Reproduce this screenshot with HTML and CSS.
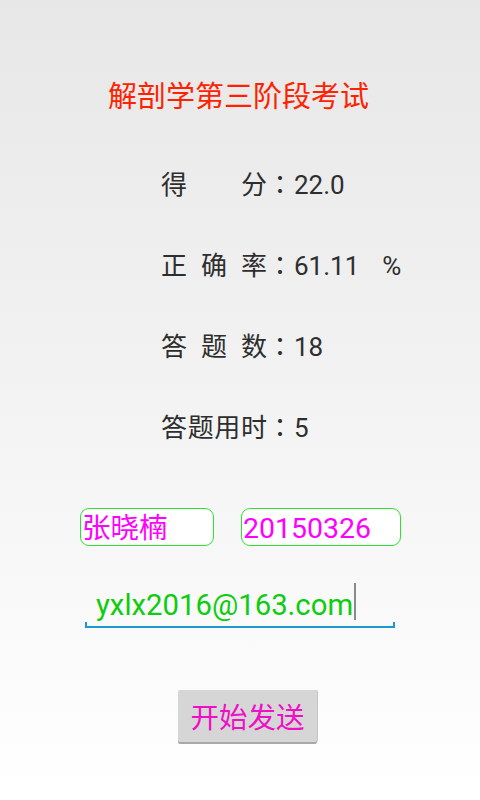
FILE: index.html
```html
<!DOCTYPE html>
<html lang="zh">
<head>
<meta charset="utf-8">
<title>解剖学第三阶段考试</title>
<link rel="stylesheet" href="styles.css">
</head>
<body>
<div class="screen">
  <h1 class="title">解剖学第三阶段考试</h1>
  <div class="stats">
    <div class="row"><span class="label">得分</span><span class="colon">：</span><span class="value">22.0</span></div>
    <div class="row"><span class="label">正确率</span><span class="colon">：</span><span class="value">61.11<span class="pct">%</span></span></div>
    <div class="row"><span class="label">答题数</span><span class="colon">：</span><span class="value">18</span></div>
    <div class="row"><span class="label">答题用时</span><span class="colon">：</span><span class="value">5</span></div>
  </div>
  <div class="boxes">
    <div class="box name">张晓楠</div>
    <div class="box num">20150326</div>
  </div>
  <div class="email">
    <div class="email-text">yxlx2016@163.com<span class="cursor"></span></div>
    <div class="line"></div>
  </div>
  <div class="actions">
    <button class="send">开始发送</button>
  </div>
</div>
</body>
</html>
```
FILE: styles.css
```css
html, body {
  margin: 0;
  padding: 0;
}
body {
  width: 480px;
  height: 800px;
  overflow: hidden;
  background: linear-gradient(to bottom, #e7e7e7 0%, #f4f4f4 55%, #ffffff 100%);
  font-family: Roboto, "Noto Sans CJK SC", sans-serif;
}
.screen {
  display: flex;
  flex-direction: column;
}
.title {
  margin: 0;
  padding-top: 74px;
  padding-right: 3px;
  height: 40px;
  line-height: 40px;
  text-align: center;
  font-size: 29px;
  font-weight: normal;
  color: #ff2200;
  font-family: "Noto Sans CJK SC", sans-serif;
}
.stats {
  margin-top: 49px;
  padding-left: 161px;
  display: flex;
  flex-direction: column;
  gap: 41px;
}
.row {
  height: 40px;
  line-height: 40px;
  font-size: 26px;
  color: #2e2e2e;
  display: flex;
  align-items: baseline;
}
.label {
  display: inline-block;
  width: 106px;
  text-align: justify;
  text-align-last: justify;
  font-family: "Noto Sans CJK SC", sans-serif;
}
.colon {
  display: inline-block;
  width: 25px;
  margin-left: 0;
  margin-right: 2px;
  text-align: center;
  font-family: "Noto Sans CJK JP", "Noto Sans CJK TC", sans-serif;
}
.value {
  font-family: Roboto, sans-serif;
}
.pct {
  margin-left: 23px;
}
.boxes {
  margin-top: 62px;
  padding-left: 80px;
  display: flex;
  gap: 27px;
}
.box {
  box-sizing: border-box;
  height: 38px;
  border: 1.5px solid #2fe02f;
  border-radius: 9px;
  background: #ffffff;
  color: #ff00ff;
  font-size: 28.5px;
  line-height: 34px;
  padding-top: 3px;
  padding-left: 1px;
  font-family: Roboto, "Noto Sans CJK SC", sans-serif;
}
.name {
  width: 134px;
}
.num {
  width: 160px;
  padding-left: 1px;
}
.email {
  margin-top: 34px;
  margin-left: 85px;
  width: 310px;
}
.email-text {
  padding-left: 11px;
  height: 44px;
  display: flex;
  align-items: flex-end;
  font-size: 29.3px;
  line-height: 38px;
  color: #0ecc0e;
}
.cursor {
  display: inline-block;
  width: 2px;
  height: 37px;
  margin-left: 1px;
  margin-bottom: 4px;
  background: #8a8a8a;
  align-self: flex-end;
}
.line {
  box-sizing: border-box;
  height: 6px;
  border: 2px solid #1a9bcc;
  border-top: none;
  margin-top: -2px;
}
.actions {
  margin-top: 62px;
  padding-left: 178px;
}
.send {
  width: 139px;
  height: 52px;
  border: none;
  border-radius: 2px;
  background: #d6d6d6;
  box-shadow: 0 2px 0 #a9a9a9, 1px 0 0 #c4c4c4;
  color: #ee0fc6;
  font-size: 28.5px;
  font-family: "Noto Sans CJK SC", sans-serif;
  padding: 0;
  line-height: 48px;
}
```
